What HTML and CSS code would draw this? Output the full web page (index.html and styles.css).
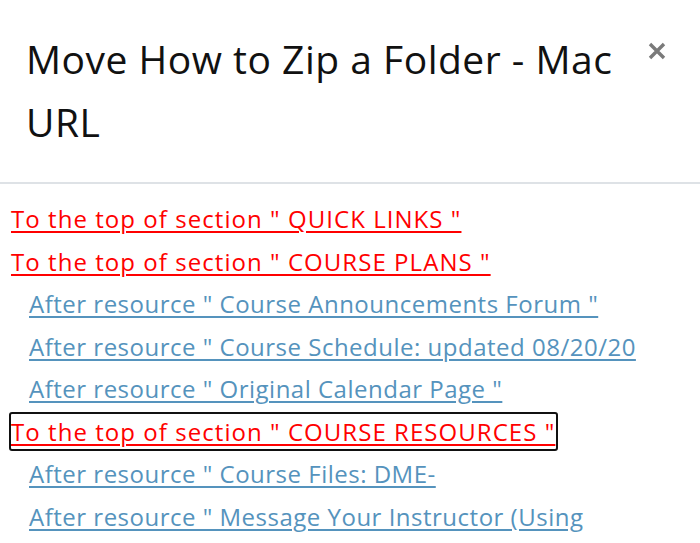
FILE: index.html
```html
<!DOCTYPE html>
<html>
<head>
<meta charset="utf-8">
<link rel="stylesheet" href="styles.css">
</head>
<body>
<div class="modal">
  <div class="modal-header">
    <h5 class="modal-title">Move How to Zip a Folder - Mac URL</h5>
    <button class="close" type="button" aria-label="Close">
      <svg viewBox="0 0 18 18" width="18" height="18"><path d="M2 2 L16 16 M16 2 L2 16" stroke="#7a7a7a" stroke-width="3.4" stroke-linecap="butt"/></svg>
    </button>
  </div>
  <div class="modal-body">
    <ul class="targets">
      <li class="section"><a href="#">To the top of section " QUICK LINKS "</a></li>
      <li class="section"><a href="#">To the top of section " COURSE PLANS "</a></li>
      <li class="resource"><a href="#">After resource " Course Announcements Forum "</a></li>
      <li class="resource"><a href="#">After resource " Course Schedule: updated 08/20/20</a></li>
      <li class="resource"><a href="#">After resource " Original Calendar Page "</a></li>
      <li class="section"><a href="#" class="focused">To the top of section " COURSE RESOURCES "</a></li>
      <li class="resource"><a href="#">After resource " Course Files: DME-</a></li>
      <li class="resource"><a href="#">After resource " Message Your Instructor (Using</a></li>
    </ul>
  </div>
</div>
</body>
</html>
```
FILE: styles.css
```css
html, body {
  margin: 0;
  padding: 0;
  background: #fff;
  overflow: hidden;
}
body {
  font-family: "Open Sans", "Noto Sans", "Liberation Sans", sans-serif;
  width: 700px;
  height: 543px;
}
.modal {
  width: 700px;
}
.modal-header {
  display: flex;
  align-items: flex-start;
  justify-content: space-between;
  padding: 27px 34px 29px 26px;
  border-bottom: 2px solid #dee2e6;
}
.modal-title {
  margin: 0;
  font-size: 39px;
  font-weight: 400;
  line-height: 63px;
  color: #111;
  width: 620px;
  letter-spacing: 0.5px;
}
.close {
  background: none;
  border: 0;
  padding: 0;
  margin: 15px 0 0 0;
  width: 18px;
  height: 18px;
  display: flex;
}
.modal-body {
  padding: 14px 0 0 11px;
}
.targets {
  list-style: none;
  margin: 0;
  padding: 0;
  font-size: 24px;
}
.targets li {
  height: 42.5px;
  line-height: 42.5px;
  white-space: nowrap;
}
.targets a {
  text-decoration: underline;
  text-underline-offset: 3px;
  text-decoration-thickness: 2px;
}
.section a {
  color: #ff0000;
  letter-spacing: 1.05px;
}
.resource {
  padding-left: 18px;
}
.resource a {
  color: #5593bd;
  letter-spacing: 0.5px;
}
.focused {
  border: 2px solid #111;
  border-radius: 3px;
  margin-left: -2px;
  padding: 1px 1px 1px 0;
}
```
